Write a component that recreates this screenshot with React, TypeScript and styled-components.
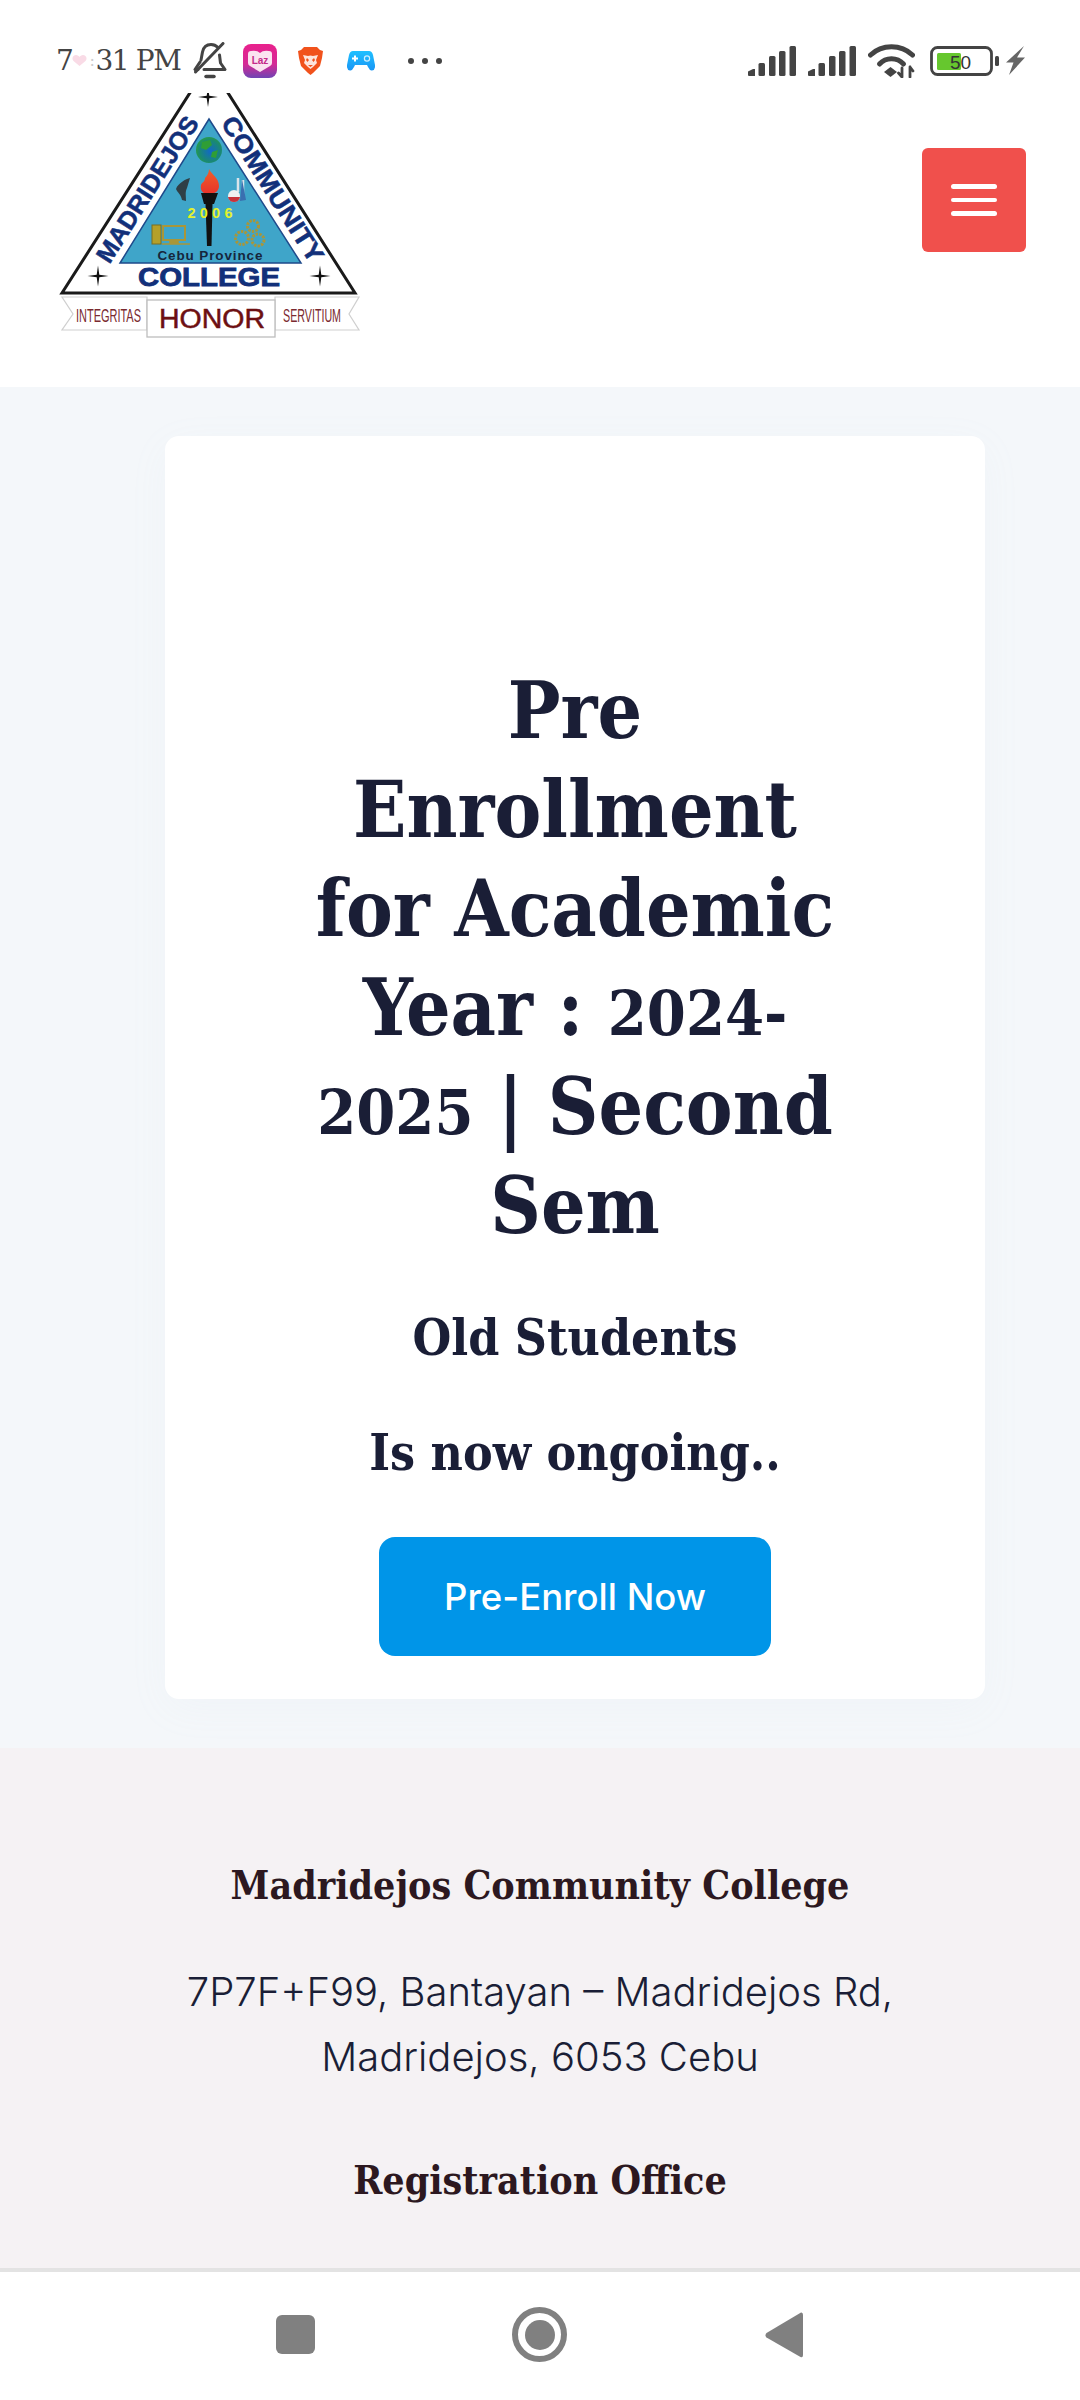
import React from "react";
import styled, { createGlobalStyle } from "styled-components";

const GlobalStyle = createGlobalStyle`
  html, body {
    margin: 0;
    padding: 0;
    background: #fff;
  }
  * {
    box-sizing: border-box;
  }
`;

const serif = `"DejaVu Serif Condensed", "DejaVu Serif", serif`;
const sans = `Inter, "Open Sans", sans-serif`;

const Page = styled.div`
  width: 1080px;
  height: 2400px;
  display: flex;
  flex-direction: column;
  overflow: hidden;
  background: #fff;
`;

const StatusBar = styled.div`
  height: 93px;
  flex: none;
  display: flex;
  align-items: flex-start;
  justify-content: space-between;
  padding: 42px 55px 0 56px;
  background: #fff;
`;

const StatusGroup = styled.div`
  display: flex;
  align-items: center;
  height: 37px;
`;

const Time = styled.div`
  display: flex;
  align-items: center;
  width: 127px;
  font-family: "DejaVu Serif", serif;
  font-size: 28px;
  letter-spacing: -1.4px;
  color: #444;
  white-space: nowrap;
`;

const Colon = styled.span`
  color: #ccc;
  font-size: 16px;
  margin: 0 2px 0 2px;
`;

const Slot = styled.div<{ $ml: number; $w: number }>`
  flex: none;
  display: flex;
  align-items: center;
  justify-content: center;
  width: ${(p) => p.$w}px;
  margin-left: ${(p) => p.$ml}px;
`;

const Dots = styled.div`
  display: flex;
  gap: 8px;
  margin-left: 33px;
`;

const Dot = styled.span`
  width: 6px;
  height: 6px;
  border-radius: 50%;
  background: #444;
`;

const Header = styled.header`
  height: 294px;
  flex: none;
  display: flex;
  align-items: flex-start;
  justify-content: space-between;
  padding-left: 50px;
  padding-right: 54px;
  background: #fff;
`;

const MenuButton = styled.button`
  width: 104px;
  height: 104px;
  margin-top: 55px;
  display: flex;
  flex-direction: column;
  align-items: center;
  justify-content: center;
  gap: 9px;
  padding: 0;
  border: 0;
  border-radius: 6px;
  background: #f0504c;
`;

const MenuBar = styled.span`
  width: 46px;
  height: 4.5px;
  border-radius: 3px;
  background: #fff;
`;

const Hero = styled.section`
  height: 1361px;
  flex: none;
  padding: 49px 95px 49px 165px;
  background: #f4f7fa;
`;

const Card = styled.div`
  height: 1263px;
  display: flex;
  flex-direction: column;
  align-items: center;
  padding-top: 225px;
  background: #fff;
  border-radius: 14px;
  box-shadow: 0 10px 40px rgba(190, 205, 225, 0.06);
`;

const Title = styled.h1`
  margin: 0;
  font-family: ${serif};
  font-weight: 700;
  font-size: 78px;
  line-height: 99px;
  text-align: center;
  color: #1a1e36;
  white-space: nowrap;
`;

// the original face has old-style figures, these sit at about x-height
const Figures = styled.span`
  font-size: 0.8em;
  line-height: 0;
`;

const SubTitle = styled.h2<{ $mt: number }>`
  margin: ${(p) => p.$mt}px 0 0;
  font-family: ${serif};
  font-weight: 700;
  font-size: 49.5px;
  line-height: 64px;
  text-align: center;
  color: #1a1e36;
`;

const EnrollButton = styled.a`
  width: 392px;
  height: 119px;
  margin-top: 52px;
  display: flex;
  align-items: center;
  justify-content: center;
  border-radius: 16px;
  background: #0095e8;
  font-family: ${sans};
  font-weight: 500;
  font-size: 36.5px;
  color: #fff;
`;

const Footer = styled.footer`
  flex: 1;
  display: flex;
  flex-direction: column;
  align-items: center;
  padding-top: 113px;
  background: #f5f2f4;
`;

const FooterHeading = styled.h3<{ $mt?: number }>`
  margin: ${(p) => p.$mt ?? 0}px 0 0;
  font-family: ${serif};
  font-weight: 700;
  font-size: 39px;
  line-height: 48px;
  color: #2c1820;
`;

const Address = styled.p`
  margin: 50px 0 0;
  font-family: ${sans};
  font-weight: 300;
  font-size: 40px;
  line-height: 65px;
  text-align: center;
  color: #1a1e36;
`;

const NavBar = styled.nav`
  height: 132px;
  flex: none;
  display: flex;
  align-items: center;
  padding-left: 276px;
  padding-bottom: 3px;
  background: #fff;
  border-top: 4px solid #e3e3e3;
`;

const NavSquare = styled.span`
  width: 39px;
  height: 39px;
  border-radius: 6px;
  background: #808080;
`;

const NavHome = styled.span`
  width: 55px;
  height: 55px;
  margin-left: 197px;
  border-radius: 50%;
  border: 6px solid #808080;
  display: flex;
  align-items: center;
  justify-content: center;
  &::after {
    content: "";
    width: 30px;
    height: 30px;
    border-radius: 50%;
    background: #808080;
  }
`;

const NavBack = styled.svg`
  margin-left: 198px;
`;

const Signal = () => (
  <svg width="48" height="30" viewBox="0 0 48 30" fill="#444">
    <path d="M0 25.5 L5 23 L7 23 L7 30 L1 30 Q0 30 0 29 Z" />
    <rect x="10.5" y="17" width="6.5" height="13" rx="1.5" />
    <rect x="21" y="10" width="6.5" height="20" rx="1.5" />
    <rect x="31" y="5" width="6.5" height="25" rx="1.5" />
    <rect x="41.5" y="0" width="6.5" height="30" rx="1.5" />
  </svg>
);

const Wifi = () => (
  <svg width="47" height="34" viewBox="0 0 47 34" fill="none" stroke="#444" strokeLinecap="round">
    <path d="M2.5 11 C14 0 33 0 44.5 11" strokeWidth="5" />
    <path d="M11.5 20 C18 13 29 13 35.5 20" strokeWidth="5" />
    <path d="M16 28 L22.5 23 L29 28 L22.5 33 Z" fill="#444" stroke="none" />
    <path d="M34 24 V33 M30.5 29 L34 33 M42 23 V33 M42 23 L45 27" strokeWidth="2.8" />
  </svg>
);

const Battery = () => (
  <svg width="69" height="30" viewBox="0 0 69 30">
    <rect x="1.5" y="1.5" width="60" height="27" rx="6" fill="#fff" stroke="#444" strokeWidth="2.8" />
    <rect x="7" y="7" width="24" height="17" rx="1.5" fill="#66c72e" />
    <text x="20" y="23" fontFamily="Liberation Sans, sans-serif" fontSize="19" fill="#333">
      50
    </text>
    <rect x="65" y="10" width="4" height="10" rx="1.5" fill="#444" />
  </svg>
);

const Bolt = () => (
  <svg width="19" height="29" viewBox="0 0 19 29" fill="#666">
    <path d="M18 0 L0 16.5 L7.5 16.5 L3 29 L19 11.5 L11 11.5 Z" />
  </svg>
);

const BellSlash = () => (
  <svg width="34" height="37" viewBox="0 0 34 37" fill="none" stroke="#444" strokeWidth="3" strokeLinecap="round" strokeLinejoin="round">
    <path d="M8 18 L9.5 10 C10.5 5 14 2.5 18 2.5 C21 2.5 23 3.5 25 5.5" />
    <path d="M26.5 13 L27.5 21 L32 27.5 H11" />
    <path d="M7 20 L2 27.5 H5" />
    <path d="M30 1.5 L2.5 30" />
    <path d="M13 34.5 H21" strokeWidth="3.5" />
  </svg>
);

const LazIcon = () => (
  <svg width="34" height="34" viewBox="0 0 34 34">
    <defs>
      <linearGradient id="laz" x1="0" y1="0" x2="0" y2="1">
        <stop offset="0" stopColor="#e9218c" />
        <stop offset="0.6" stopColor="#d42a96" />
        <stop offset="1" stopColor="#6f44b4" />
      </linearGradient>
    </defs>
    <rect width="34" height="34" rx="8" fill="url(#laz)" />
    <path d="M5 10 Q5 7 8 7 Q14 6 17 9 Q20 6 26 7 Q29 7 29 10 L29 19 Q29 21 27 22 L17 28 L7 22 Q5 21 5 19 Z" fill="#fbe3f0" />
    <text x="17" y="20" textAnchor="middle" fontFamily="Liberation Sans, sans-serif" fontWeight="700" fontSize="10" fill="#c42a8a">
      Laz
    </text>
  </svg>
);

const BraveIcon = () => (
  <svg width="25" height="28" viewBox="0 0 25 28">
    <path d="M6 0 L19 0 L22 3 L25 4 L24 11 L22 19 L15 26 L12.5 28 L10 26 L3 19 L1 11 L0 4 L3 3 Z" fill="#f1521c" />
    <path d="M5 8 L10 9 L12.5 8.5 L15 9 L20 8 L18 13 L19 16 L15 20 L12.5 22 L10 20 L6 16 L7 13 Z" fill="#fff" opacity="0.85" />
    <path d="M9 11 L11 13 L9.5 15 L8 13 Z M16 11 L17 13 L15.5 15 L14 13 Z M10 18 L15 18 L12.5 20 Z" fill="#f1521c" />
  </svg>
);

const GameIcon = () => (
  <svg width="28" height="20" viewBox="0 0 28 20">
    <defs>
      <linearGradient id="pad" x1="0" y1="0" x2="0" y2="1">
        <stop offset="0" stopColor="#1fc0ff" />
        <stop offset="1" stopColor="#1a96f5" />
      </linearGradient>
    </defs>
    <path d="M6 0 H22 Q25 0 26 4 L28 14 Q28.5 19 25 19.5 Q23 20 21 16 L20 14 H8 L7 16 Q5 20 3 19.5 Q-0.5 19 0 14 L2 4 Q3 0 6 0 Z" fill="url(#pad)" />
    <path d="M8 4.5 V10.5 M5 7.5 H11" stroke="#fff" strokeWidth="2" />
    <circle cx="20" cy="7.5" r="2.6" fill="none" stroke="#cdeeff" strokeWidth="1.2" />
  </svg>
);

const HeartIcon = () => (
  <svg width="15" height="11" viewBox="0 0 15 11" fill="#f9dbe6">
    <path d="M7.5 11 L1.5 6 C-1 3 1.5 0 4 0 C5.5 0 7 1 7.5 2 C8 1 9.5 0 11 0 C13.5 0 16 3 13.5 6 Z" />
  </svg>
);

const Sparkle = ({ x, y, r = 10 }: { x: number; y: number; r?: number }) => (
  <path
    d={`M${x} ${y - r} L${x + 1.3} ${y - 1.3} L${x + r} ${y} L${x + 1.3} ${y + 1.3} L${x} ${y + r} L${x - 1.3} ${y + 1.3} L${x - r} ${y} L${x - 1.3} ${y - 1.3} Z`}
    fill="#111"
  />
);

const Gear = ({ x, y, r }: { x: number; y: number; r: number }) => (
  <circle cx={x} cy={y} r={r} fill="none" stroke="#a8963a" strokeWidth="3" strokeDasharray="2.4 1.2" />
);

// drawn in page pixels, the status bar cuts the top of the triangle off
const Logo = () => (
  <svg width="320" height="247" viewBox="50 93 320 247">
    <defs>
      <radialGradient id="globe" cx="0.55" cy="0.55" r="0.6">
        <stop offset="0" stopColor="#1268c8" />
        <stop offset="0.7" stopColor="#1a8a70" />
        <stop offset="1" stopColor="#2aa040" />
      </radialGradient>
      <linearGradient id="flame" x1="0" y1="0" x2="0" y2="1">
        <stop offset="0" stopColor="#f0602a" />
        <stop offset="1" stopColor="#e8332a" />
      </linearGradient>
    </defs>
    <path d="M209 63 L355 293 L62 293 Z" fill="#fff" stroke="#1a1a1a" strokeWidth="3" strokeLinejoin="miter" />
    <path d="M209 119 L301 263 L120 263 Z" fill="#3fa5c9" stroke="#1e4a8b" strokeWidth="1.5" />
    <Sparkle x={208} y={97} r={10} />
    <Sparkle x={98} y={276} r={10.5} />
    <Sparkle x={320} y={276} r={10.5} />

    <text
      transform="translate(147 189) rotate(-57.5) translate(0 9)"
      textAnchor="middle"
      fontFamily="Liberation Sans, sans-serif"
      fontWeight="700"
      fontSize="25"
      textLength="168"
      lengthAdjust="spacingAndGlyphs"
      fill="#12307a"
      stroke="#12307a"
      strokeWidth="0.5"
    >
      MADRIDEJOS
    </text>
    <text
      transform="translate(273 189) rotate(57.5) translate(0 9)"
      textAnchor="middle"
      fontFamily="Liberation Sans, sans-serif"
      fontWeight="700"
      fontSize="25"
      textLength="168"
      lengthAdjust="spacingAndGlyphs"
      fill="#12307a"
      stroke="#12307a"
      strokeWidth="0.5"
    >
      COMMUNITY
    </text>
    <text
      x="209"
      y="286"
      textAnchor="middle"
      fontFamily="Liberation Sans, sans-serif"
      fontWeight="700"
      fontSize="25"
      textLength="142"
      lengthAdjust="spacingAndGlyphs"
      fill="#12307a"
      stroke="#12307a"
      strokeWidth="0.8"
    >
      COLLEGE
    </text>

    <circle cx="209" cy="150" r="13" fill="url(#globe)" />
    <path d="M202 142 L210 140 L212 145 L206 150 L201 148 Z M212 152 L218 150 L216 158 L211 157 Z" fill="#2f9e35" />

    <path d="M209 169 C212 175 219 178 219 186 C219 191 215 194 209 194 C203 194 200 191 201 185 C202 182 205 182 205 178 C207 176 209 173 209 169 Z" fill="url(#flame)" />
    <path d="M201 193 H218 L214 204 H204 Z" fill="#111" />
    <path d="M205.5 204 H212.5 L211.5 246 H207 Z" fill="#111" />
    <text
      x="210"
      y="218"
      textAnchor="middle"
      fontFamily="Liberation Sans, sans-serif"
      fontWeight="700"
      fontSize="14.5"
      textLength="45"
      fill="#e4f22c"
    >
      2006
    </text>

    <path d="M190 178 C186 179 178 183 176 189 C177 192 181 194 182 200 L186 201 C186 195 185 192 187 188 Z" fill="#2f3f46" />
    <path d="M238 178 L238 192 M243 180 L243 194" stroke="#d9e4ea" strokeWidth="2.5" />
    <path d="M242 179 L246 200 L240 201 Z" fill="#3a6fb0" />
    <circle cx="234" cy="196" r="6" fill="#f0f0f0" />
    <path d="M228 197 H240 Q239 202 234 202 Q229 202 228 197 Z" fill="#c8323a" />

    <rect x="152" y="225" width="9" height="19" fill="#b4a02a" stroke="#7a6e20" />
    <rect x="163" y="226" width="22" height="14" fill="#3fa5c9" stroke="#a8963a" strokeWidth="2" />
    <path d="M170 240 H178 V243 H170 Z M162 244 H190" stroke="#a8963a" strokeWidth="1.5" fill="#a8963a" />

    <Gear x={253} y={226} r={5.5} />
    <Gear x={242} y={238} r={6.5} />
    <Gear x={258} y={240} r={6} />

    <text
      x="210"
      y="260"
      textAnchor="middle"
      fontFamily="Liberation Sans, sans-serif"
      fontWeight="700"
      fontSize="13.5"
      textLength="105"
      fill="#16263c"
    >
      Cebu Province
    </text>

    <path d="M62 297 H147 V330 H62 L73 314 Z" fill="#fff" stroke="#cfcfcf" strokeWidth="1.2" />
    <path d="M359 297 H275 V330 H359 L349 314 Z" fill="#fff" stroke="#cfcfcf" strokeWidth="1.2" />
    <rect x="147" y="300" width="128" height="37" fill="#fff" stroke="#bdbdbd" strokeWidth="1.3" />
    <text x="212" y="328" textAnchor="middle" fontFamily="Liberation Sans, sans-serif" fontSize="27" textLength="106" lengthAdjust="spacingAndGlyphs" fill="#6d0f12" stroke="#6d0f12" strokeWidth="0.5">
      HONOR
    </text>
    <text x="76" y="322" fontFamily="Liberation Sans, sans-serif" fontSize="19" textLength="65" lengthAdjust="spacingAndGlyphs" fill="#7a2a30">
      INTEGRITAS
    </text>
    <text x="283" y="322" fontFamily="Liberation Sans, sans-serif" fontSize="19" textLength="58" lengthAdjust="spacingAndGlyphs" fill="#7a2a30">
      SERVITIUM
    </text>
  </svg>
);

export default function App() {
  return (
    <>
      <GlobalStyle />
      <Page>
        <StatusBar>
          <StatusGroup>
            <Time>
              7
              <HeartIcon />
              <Colon>:</Colon>
              31 PM
            </Time>
            <Slot $ml={10} $w={34}>
              <BellSlash />
            </Slot>
            <Slot $ml={16} $w={34}>
              <LazIcon />
            </Slot>
            <Slot $ml={21} $w={25}>
              <BraveIcon />
            </Slot>
            <Slot $ml={24} $w={28}>
              <GameIcon />
            </Slot>
            <Dots>
              <Dot />
              <Dot />
              <Dot />
            </Dots>
          </StatusGroup>
          <StatusGroup>
            <Signal />
            <Slot $ml={12} $w={48}>
              <Signal />
            </Slot>
            <Slot $ml={12} $w={47}>
              <Wifi />
            </Slot>
            <Slot $ml={15} $w={69}>
              <Battery />
            </Slot>
            <Slot $ml={7} $w={19}>
              <Bolt />
            </Slot>
          </StatusGroup>
        </StatusBar>

        <Header>
          <Logo />
          <MenuButton aria-label="Menu">
            <MenuBar />
            <MenuBar />
            <MenuBar />
          </MenuButton>
        </Header>

        <Hero>
          <Card>
            <Title>
              Pre
              <br />
              Enrollment
              <br />
              for Academic
              <br />
              Year : <Figures>2024-</Figures>
              <br />
              <Figures>2025</Figures> | Second
              <br />
              Sem
            </Title>
            <SubTitle $mt={51}>Old Students</SubTitle>
            <SubTitle $mt={51}>Is now ongoing..</SubTitle>
            <EnrollButton>Pre-Enroll Now</EnrollButton>
          </Card>
        </Hero>

        <Footer>
          <FooterHeading>Madridejos Community College</FooterHeading>
          <Address>
            7P7F+F99, Bantayan – Madridejos Rd,
            <br />
            Madridejos, 6053 Cebu
          </Address>
          <FooterHeading $mt={67}>Registration Office</FooterHeading>
        </Footer>

        <NavBar>
          <NavSquare />
          <NavHome />
          <NavBack width="38" height="46" viewBox="0 0 38 46" fill="#808080">
            <path d="M36 0.5 Q38 0 38 3 V43 Q38 46 35.5 45 L1.5 25.5 Q-0.5 23 1.5 21 Z" />
          </NavBack>
        </NavBar>
      </Page>
    </>
  );
}
